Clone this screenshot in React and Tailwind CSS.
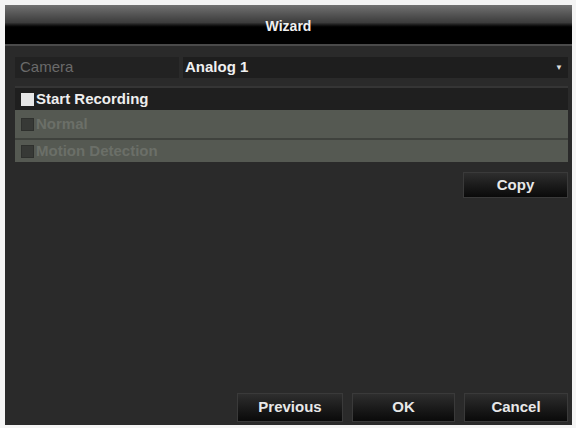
import React from 'react';

const font = { fontFamily: '"Liberation Sans", Arial, sans-serif' };

const Button = ({ label, className = '' }) => (
    <button
        className={`border border-[#3a3a3a] bg-gradient-to-b from-[#2e2e2e] to-[#0a0a0a] text-[15px] font-bold text-[#e8e8e8] ${className}`}
    >
        {label}
    </button>
);

const CheckRow = ({ label, checked, disabled, h = 'h-[22px]' }) => (
    <div
        className={`flex ${h} items-center pl-[6px] ${disabled ? 'bg-[#555952]' : 'bg-[#1f1f1f]'}`}
    >
        <span
            className={`mr-[2px] h-[13px] w-[13px] ${
                checked ? 'bg-[#e6e6e6]' : 'bg-[#373936] border border-[#2e302d]'
            }`}
        />
        <span className={`text-[15px] font-bold ${disabled ? 'text-[#6b6f68]' : 'text-[#eeeeee]'}`}>
            {label}
        </span>
    </div>
);

export default function App() {
    return (
        <div className="h-[428px] w-[576px] bg-[#f4f4f4] pl-[5px] pr-[4px] pt-[5px] pb-[3px]" style={font}>
            <div className="flex h-full flex-col bg-[#2a2a2a]">
                {/* title bar */}
                <div className="flex h-[41px] items-center justify-center pt-[4px] bg-gradient-to-b from-[#727272] via-[#3c3c3c] via-45% to-[#000000] to-60% border-b-[2px] border-[#4a4a4a]">
                    <span className="text-[14px] font-bold text-[#f0f0f0]">Wizard</span>
                </div>

                <div className="flex flex-1 flex-col pl-[10px] pr-[4px] pt-[11px] pb-[3px]">
                    {/* camera select */}
                    <div className="flex h-[21px] gap-[4px]">
                        <div className="flex w-[164px] items-center bg-[#222222] pl-[5px] text-[15px] text-[#6a6a6a]">
                            Camera
                        </div>
                        <div className="flex flex-1 items-center justify-between bg-[#1e1e1e] pl-[2px] pr-[5px]">
                            <span className="text-[15px] font-bold text-[#f0f0f0]">Analog 1</span>
                            <span className="text-[8px] text-[#dddddd]">▼</span>
                        </div>
                    </div>

                    <div className="mt-[8px] h-[2px] bg-[#353535]" />

                    <div className="flex flex-col">
                        <CheckRow label="Start Recording" checked />
                        <CheckRow label="Normal" disabled h="h-[28px]" />
                        <div className="h-[2px] bg-[#3f423d]" />
                        <CheckRow label="Motion Detection" disabled h="h-[22px]" />
                    </div>

                    <div className="mt-[10px] flex justify-end">
                        <Button label="Copy" className="h-[26px] w-[105px]" />
                    </div>

                    <div className="flex-1" />

                    {/* footer buttons */}
                    <div className="flex justify-end gap-[9px]">
                        <Button label="Previous" className="h-[29px] w-[106px]" />
                        <Button label="OK" className="h-[29px] w-[103px]" />
                        <Button label="Cancel" className="h-[29px] w-[104px]" />
                    </div>
                </div>
            </div>
        </div>
    );
}
